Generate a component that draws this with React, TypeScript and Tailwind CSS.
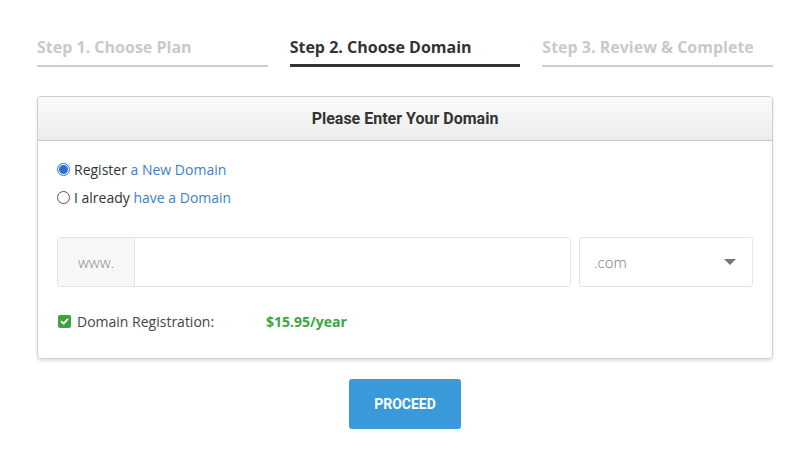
import React from "react";

export default function App() {
  return (
    <div className="w-[812px] h-[452px] bg-white font-['Open_Sans',sans-serif]">
      <div className="ml-[37px] w-[736px] pt-[36px]">
        <div className="grid grid-cols-3 gap-[22px]">
          <div className="border-b-2 border-[#cfcfcf] pb-[7px] text-[16px] font-bold leading-[22px] text-[#c9c9c9]">
            Step 1. Choose Plan
          </div>
          <div className="border-b-[3px] border-[#333] pb-[6px] text-[16px] font-bold leading-[22px] text-[#333]">
            Step 2. Choose Domain
          </div>
          <div className="border-b-2 border-[#cfcfcf] pb-[7px] text-[16px] font-bold leading-[22px] text-[#c9c9c9]">
            Step 3. Review &amp; Complete
          </div>
        </div>

        <div className="mt-[29px] rounded-[4px] border border-[#cfcfcf] shadow-[0_2px_3px_rgba(0,0,0,0.12)]">
          <div className="flex h-[44px] items-center justify-center rounded-t-[4px] border-b border-[#c8c8c8] bg-gradient-to-b from-[#fbfbfb] to-[#ececec] font-['Roboto',sans-serif] text-[16px] font-bold text-[#333]">
            Please Enter Your Domain
          </div>
          <div className="px-[19px] pt-[18px] pb-[27px]">
            <div className="flex flex-col gap-[8px] text-[14px] text-[#333]">
              <label className="flex h-[20px] items-center">
                <span className="mr-[4px] flex h-[13px] w-[13px] items-center justify-center rounded-full border border-[#2a6ed8] bg-white">
                  <span className="h-[9px] w-[9px] rounded-full bg-[#2a6ed8]" />
                </span>
                <span>
                  Register <span className="text-[#3f7fc3]">a New Domain</span>
                </span>
              </label>
              <label className="flex h-[20px] items-center">
                <span className="mr-[4px] h-[13px] w-[13px] rounded-full border border-[#555] bg-white" />
                <span>
                  I already <span className="text-[#3f7fc3]">have a Domain</span>
                </span>
              </label>
            </div>

            <div className="mt-[30px] flex h-[50px] gap-[8px]">
              <div className="flex flex-1 rounded-[3px] border border-[#e3e3e3]">
                <div className="flex w-[77px] items-center justify-center border-r border-[#e3e3e3] bg-[#f7f7f7] text-[15px] font-light text-[#888]">
                  www.
                </div>
                <div className="flex-1 bg-white" />
              </div>
              <div className="flex w-[174px] items-center justify-between rounded-[3px] border border-[#e3e3e3] pl-[14px] pr-[16px] text-[15px] font-light text-[#777]">
                <span>.com</span>
                <svg width="12" height="7" viewBox="0 0 12 7">
                  <path d="M0 0 L12 0 L6 6 Z" fill="#777" />
                </svg>
              </div>
            </div>

            <div className="mt-[24px] flex h-[20px] items-center text-[14px] text-[#444]">
              <span className="ml-[1px] flex h-[13px] w-[13px] items-center justify-center rounded-[2px] bg-[#3aa63f]">
                <svg width="9" height="9" viewBox="0 0 9 9">
                  <path d="M1.5 4.6 L3.6 6.6 L7.5 2.4" stroke="#fff" strokeWidth="1.8" fill="none" strokeLinecap="round" strokeLinejoin="round" />
                </svg>
              </span>
              <span className="ml-[6px] w-[189px]">Domain Registration:</span>
              <span className="font-bold text-[#3aa63f]">$15.95/year</span>
            </div>
          </div>
        </div>

        <div className="mt-[20px] flex justify-center">
          <button className="h-[50px] w-[112px] rounded-[3px] bg-[#3a9ad9] font-['Roboto',sans-serif] text-[14px] font-bold text-white">
            PROCEED
          </button>
        </div>
      </div>
    </div>
  );
}
